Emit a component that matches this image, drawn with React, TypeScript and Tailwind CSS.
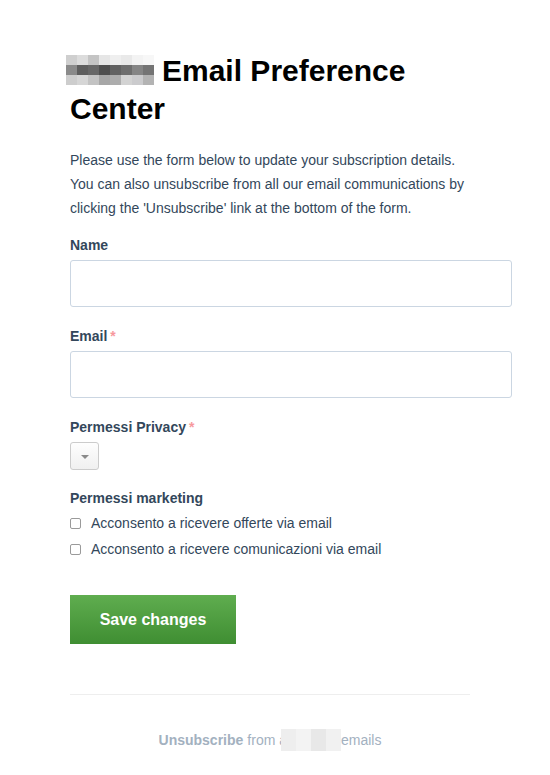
import React from "react";

const blurTop = ["#cfcfcf", "#dcdcdc", "#c4c4c4", "#e6e6e6", "#efefef", "#e9e9e9", "#f3f3f3", "#f7f7f7"];
const blurMid = ["#8a8a8a", "#5e5e5e", "#676767", "#4f4f4f", "#626262", "#6e6e6e", "#858585", "#747474"];
const blurBot = ["#cdcdcd", "#d6d6d6", "#c3c3c3", "#a7a7a7", "#adadad", "#d3d3d3", "#cbcbcd", "#b3b3b3"];

function BlurredLogo() {
  return (
    <span className="-ml-[4px] mr-[8px] inline-block align-[-4px]">
      {[blurTop, blurMid, blurBot].map((row, i) => (
        <span key={i} className="flex">
          {row.map((c, j) => (
            <span key={j} className="h-[10px] w-[11px]" style={{ backgroundColor: c }} />
          ))}
        </span>
      ))}
    </span>
  );
}

function Label({ text, required }: { text: string; required?: boolean }) {
  return (
    <label className="mb-[5px] block text-[14px] font-bold leading-[20px] text-[#33475b]">
      {text}
      {required && <span className="ml-[3px] text-[#f2545b] opacity-60">*</span>}
    </label>
  );
}

export default function App() {
  return (
    <div
      className="min-h-screen bg-white"
      style={{ fontFamily: '"Liberation Sans", Arial, sans-serif' }}
    >
      <div className="w-[442px] pl-[70px] pt-[52px] box-content">
        <h1 className="w-[400px] text-[30px] font-bold leading-[38px] text-black">
          <BlurredLogo />
          Email Preference Center
        </h1>

        <p className="mt-[20px] w-[405px] text-[14px] leading-[24px] text-[#33475b]">
          Please use the form below to update your subscription details. You can also
          unsubscribe from all our email communications by clicking the 'Unsubscribe'
          link at the bottom of the form.
        </p>

        <div className="mt-[15px]">
          <Label text="Name" />
          <input className="block h-[47px] w-full rounded-[3px] border border-[#cbd6e2] bg-white" />
        </div>

        <div className="mt-[19px]">
          <Label text="Email" required />
          <input className="block h-[47px] w-full rounded-[3px] border border-[#cbd6e2] bg-white" />
        </div>

        <div className="mt-[19px]">
          <Label text="Permessi Privacy" required />
          <div className="flex h-[28px] w-[29px] items-center justify-center rounded-[3px] border border-[#cccccc] bg-gradient-to-b from-[#fefefe] to-[#f0f0f0]">
            <span className="mt-[1px] h-0 w-0 border-x-[4px] border-t-[4px] border-x-transparent border-t-[#8a8a8a]" />
          </div>
        </div>

        <div className="mt-[18px]">
          <Label text="Permessi marketing" />
          <div className="mt-[2px] flex flex-col gap-[6px] text-[14px] leading-[20px] text-[#33475b]">
            <label className="flex items-center">
              <span className="mr-[10px] h-[11px] w-[11px] rounded-[2px] border border-[#9a9a9a] bg-white" />
              Acconsento a ricevere offerte via email
            </label>
            <label className="flex items-center">
              <span className="mr-[10px] h-[11px] w-[11px] rounded-[2px] border border-[#9a9a9a] bg-white" />
              Acconsento a ricevere comunicazioni via email
            </label>
          </div>
        </div>

        <button className="mt-[36px] h-[49px] w-[166px] bg-gradient-to-b from-[#5fad4f] to-[#3f8e32] text-[16px] font-bold text-white">
          Save changes
        </button>

        <hr className="mt-[50px] w-[400px] border-t border-[#eeeeee]" />

        <div className="mt-[34px] flex w-[400px] items-center justify-center text-[14px] leading-[22px] text-[#a3b1bf]">
          <span className="font-bold">Unsubscribe</span>
          <span className="ml-[4px]">from a</span>
          <span className="-ml-[6px] flex h-[22px] w-[60px]">
            <span className="h-full w-[15px] bg-[#eeeeee]" />
            <span className="h-full w-[15px] bg-[#f3f3f3]" />
            <span className="h-full w-[15px] bg-[#e8e8e8]" />
            <span className="h-full w-[15px] bg-[#f1f1f1]" />
          </span>
          <span>emails</span>
        </div>
      </div>
    </div>
  );
}
